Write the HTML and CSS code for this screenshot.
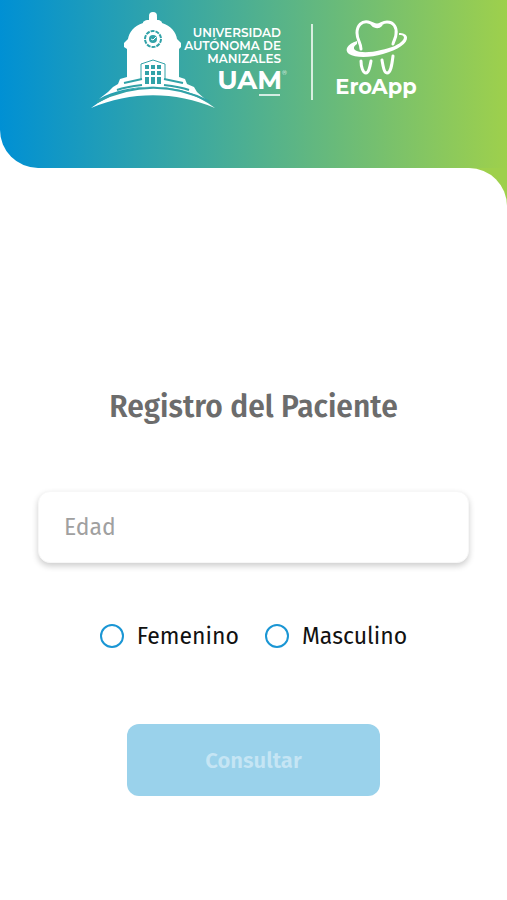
FILE: index.html
```html
<!DOCTYPE html>
<html lang="es">
<head>
    <meta charset="UTF-8">
    <meta name="viewport" content="width=device-width, initial-scale=1.0">
    <title>Registro del Paciente</title>
    <link rel="stylesheet" href="styles.css">
</head>
<body>

    <header class="header">
        <svg class="logo" viewBox="79 0 350 120" role="img" aria-label="Universidad Autónoma de Manizales - EroApp">
            <!-- Building -->
            <g fill="#fff">
                <circle cx="153" cy="16" r="4"/>
                <path d="M149 17h8v3c4 0 5 2 5 3 9 3 14 9 15 16l4 4v4l-2 2v28l6 2 2 5 7 3 3 5 9 8c-29-17-77-18-107-1l9-7 5-5 5-3 2-5 7-2V49l-3-2v-4l4-4c1-7 6-13 15-16 0-1 1-3 6-3z"/>
                <path d="M91 108c37-28 86-28 124 0-40-17-84-17-124 0z"/>
            </g>
            <g class="logo-lines">
                <circle cx="153" cy="39" r="8" stroke-width="2" stroke-dasharray="4 1"/>
                <circle cx="153" cy="39" r="4" fill="#31a2a8" stroke="none"/>
                <path d="M141 80V64l12-4 12 4v16" stroke-width="1"/>
                <path d="M151 39l2 1 3-3" stroke="#fff" stroke-width="1"/>
                <path d="M124 83l18-4M164 79l19 4M117 90c8-3 16-4 25-5M164 85c9 1 17 2 25 5" stroke-width="2"/>
                <path d="M97 102c36-19 77-19 113 0" stroke-width="2"/>
            </g>
            <path class="logo-window" d="M145 65h4v4h-4zM151 65h4v4h-4zM157 65h4v4h-4zM145 71h4v4h-4zM151 71h4v4h-4zM157 71h4v4h-4zM145 77h4v7h-4zM151 77h4v7h-4zM157 77h4v7h-4z"/>

            <!-- University name -->
            <g class="logo-name">
                <text x="281" y="37">UNIVERSIDAD</text>
                <text x="281" y="50">AUTÓNOMA DE</text>
                <text x="281" y="63">MANIZALES</text>
            </g>
            <text class="logo-uam" x="282" y="89">UAM</text>
            <text class="logo-mark" x="282" y="75">®</text>
            <path d="M259 95h21M312 24v76" stroke="#fff" stroke-width="1.5"/>

            <!-- Tooth -->
            <g fill="none" stroke="#fff" stroke-width="3" stroke-linecap="round">
                <path d="M361 49c0-6-4-9-4-16 0-8 5-12 11-11 4 1 6 3 9 3 4 0 5-3 10-3 7 0 10 6 9 12 0 4-2 6-3 10M371 23c3 4 7 5 10 2"/>
                <path d="M361 61c0 6 2 12 5 12s4-7 5-12M382 60c1 6 2 13 5 13 4 0 5-9 6-17"/>
            </g>
            <path fill="#fff" d="M357 41c-10 3-13 9-8 13 6 4 21 4 34 0 15-4 25-11 24-17-1-3-4-4-8-4v2c5 0 6 2 4 5-4 5-12 8-22 10-11 3-22 3-26 0-2-2-1-4 2-6z"/>
            <text class="logo-app" x="376" y="94">EroApp</text>
        </svg>
    </header>

    <div class="content">
        <main class="panel">
            <form class="form">
                <h1 class="title">Registro del Paciente</h1>

                <input class="age" type="text" id="edad" name="edad" inputmode="numeric" placeholder="Edad" aria-label="Edad">

                <div class="gender">
                    <label class="option" for="femenino">
                        <input type="radio" id="femenino" name="genero" value="F">
                        Femenino
                    </label>
                    <label class="option" for="masculino">
                        <input type="radio" id="masculino" name="genero" value="M">
                        Masculino
                    </label>
                </div>

                <button class="submit" type="submit" disabled>Consultar</button>
            </form>
        </main>
    </div>

</body>
</html>
```
FILE: styles.css
```css
/* General Styles */
* {
    box-sizing: border-box;
}

body {
    font-family: "Fira Sans", "Noto Sans", sans-serif;
    margin: 0;
    background-color: #fff;
}

/* Header */
.header {
    display: flex;
    justify-content: center;
    padding-bottom: 48px;
    background: linear-gradient(to right, #0090d4, #9ed04c);
    border-bottom-left-radius: 38px;
}

.logo {
    display: block;
    width: 350px;
    max-width: 100%;
}

.logo text {
    font-family: Montserrat, Inter, sans-serif;
    fill: #fff;
}

.logo-lines {
    fill: none;
    stroke: #31a2a8;
}

.logo-window {
    fill: #31a2a8;
}

.logo-name {
    font-size: 12px;
    font-weight: 600;
    text-anchor: end;
}

.logo-uam {
    font-size: 26px;
    font-weight: 700;
    text-anchor: end;
}

.logo-mark {
    font-size: 6px;
}

.logo-app {
    font-size: 21px;
    font-weight: 700;
    text-anchor: middle;
}

/* The green corner shows behind the rounded panel */
.content {
    background: linear-gradient(#9ed04c, #9ed04c) right top / 40px 40px no-repeat;
}

.panel {
    padding: 217px 38px 104px;
    background-color: #fff;
    border-top-right-radius: 38px;
}

/* Form */
.form {
    display: flex;
    flex-direction: column;
    align-items: center;
}

.title {
    margin: 0 0 62px;
    font-size: 30px;
    line-height: 44px;
    font-weight: 600;
    color: #6c6c6c;
}

.age {
    width: 100%;
    height: 72px;
    padding: 0 25px;
    font: inherit;
    font-size: 23px;
    color: #111;
    background-color: #fff;
    border: 1px solid #f7f7f7;
    border-radius: 12px;
    box-shadow: 0 3px 6px rgba(0, 0, 0, 0.2);
}

.age::placeholder {
    color: #a0a0a0;
    opacity: 1;
}

.gender {
    display: flex;
    gap: 26px;
    margin: 57px 0 72px;
}

.option {
    display: flex;
    align-items: center;
    gap: 13px;
    font-size: 23px;
    line-height: 32px;
    color: #111;
}

.option input {
    appearance: none;
    width: 24px;
    height: 24px;
    margin: 0;
    border: 2px solid #1a96d4;
    border-radius: 50%;
}

.option input:checked {
    background: radial-gradient(#1a96d4 50%, #fff 55%);
}

.submit {
    width: 253px;
    max-width: 100%;
    height: 72px;
    font: inherit;
    font-size: 22px;
    font-weight: 600;
    color: #c5e5f4;
    background-color: #9ad2eb;
    border: none;
    border-radius: 12px;
}
```
